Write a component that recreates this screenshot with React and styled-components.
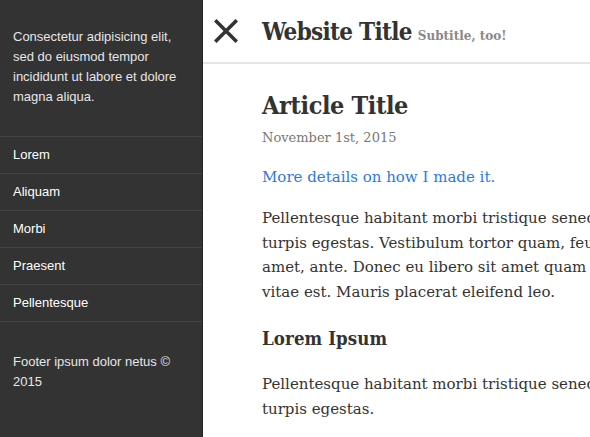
import React from 'react';
import styled, { createGlobalStyle } from 'styled-components';

const GlobalStyle = createGlobalStyle`
  html, body {
    margin: 0;
    padding: 0;
    background: #ffffff;
    overflow: hidden;
  }
`;

const Layout = styled.div`
  display: flex;
  flex-direction: row;
  width: 590px;
  height: 437px;
  overflow: hidden;
`;

const Sidebar = styled.aside`
  flex: 0 0 202px;
  display: flex;
  flex-direction: column;
  background-color: #333333;
  border-right: 1px solid #222222;
  color: #ffffff;
  font-family: "Liberation Sans", Arial, sans-serif;
  font-size: 13px;
  line-height: 20px;
`;

const Blurb = styled.p`
  margin: 0;
  padding: 27px 13px 29px;
  color: #e6e6e6;
  border-bottom: 1px solid #444444;
`;

const NavList = styled.ul`
  list-style: none;
  margin: 0;
  padding: 0;
`;

const NavItem = styled.li`
  border-bottom: 1px solid #444444;
  padding: 8px 13px;
  height: 20px;
  color: #ffffff;
`;

const Footer = styled.p`
  margin: 0;
  padding: 30px 13px;
  color: #e6e6e6;
`;

const Main = styled.main`
  flex: 1 1 auto;
  min-width: 0;
  font-family: "DejaVu Serif", "Liberation Serif", serif;
  color: #333333;
`;

const Header = styled.header`
  display: flex;
  align-items: baseline;
  height: 62px;
  border-bottom: 2px solid #e5e5e5;
  white-space: nowrap;
`;

const CloseButton = styled.div`
  align-self: center;
  display: flex;
  align-items: center;
  width: 48px;
  padding-left: 11px;
`;

const SiteTitle = styled.h1`
  margin: 0;
  padding-top: 17px;
  font-size: 24px;
  line-height: 30px;
  font-weight: 700;
  font-stretch: condensed;
  color: #333333;
  letter-spacing: -0.7px;
`;

const SiteSubtitle = styled.span`
  margin-left: 6px;
  font-size: 12px;
  font-weight: 700;
  color: #888888;
`;

const Article = styled.article`
  padding: 26px 0 0 59px;
  white-space: nowrap;
`;

const ArticleTitle = styled.h2`
  margin: 0;
  font-size: 25px;
  line-height: 32px;
  font-weight: 700;
  font-stretch: condensed;
  letter-spacing: -0.4px;
`;

const DateLine = styled.div`
  margin-top: 6px;
  font-size: 13px;
  line-height: 20px;
  color: #777777;
`;

const DetailsLink = styled.a`
  display: block;
  margin-top: 17px;
  font-size: 15px;
  line-height: 24px;
  color: #2a7ae2;
  text-decoration: none;
`;

const Paragraph = styled.p`
  margin: ${({ $gap }) => $gap}px 0 0;
  font-size: 15px;
  line-height: 24.7px;
  color: #333333;
`;

const SectionTitle = styled.h3`
  margin: 21px 0 0;
  font-size: 18.5px;
  line-height: 26px;
  font-weight: 700;
  font-stretch: condensed;
  letter-spacing: 0.1px;
`;

const CloseIcon = () => (
  <svg width="24" height="24" viewBox="0 0 24 24">
    <path d="M2.5 2.5 L21.5 21.5 M21.5 2.5 L2.5 21.5" stroke="#333" strokeWidth="3.6" strokeLinecap="square" fill="none" />
  </svg>
);

const navItems = ['Lorem', 'Aliquam', 'Morbi', 'Praesent', 'Pellentesque'];

export default function App() {
  return (
    <>
      <GlobalStyle />
      <Layout>
        <Sidebar>
          <Blurb>
            Consectetur adipisicing elit,<br />
            sed do eiusmod tempor<br />
            incididunt ut labore et dolore<br />
            magna aliqua.
          </Blurb>
          <NavList>
            {navItems.map((item) => (
              <NavItem key={item}>{item}</NavItem>
            ))}
          </NavList>
          <Footer>
            Footer ipsum dolor netus ©<br />
            2015
          </Footer>
        </Sidebar>
        <Main>
          <Header>
            <CloseButton>
              <CloseIcon />
            </CloseButton>
            <SiteTitle>Website Title</SiteTitle>
            <SiteSubtitle>Subtitle, too!</SiteSubtitle>
          </Header>
          <Article>
            <ArticleTitle>Article Title</ArticleTitle>
            <DateLine>November 1st, 2015</DateLine>
            <DetailsLink href="#">More details on how I made it.</DetailsLink>
            <Paragraph $gap={17}>
              Pellentesque habitant morbi tristique senectus et netus et malesuada fames ac<br />
              turpis egestas. Vestibulum tortor quam, feugiat vitae, ultricies eget, tempor sit<br />
              amet, ante. Donec eu libero sit amet quam egestas semper. Aenean ultricies mi<br />
              vitae est. Mauris placerat eleifend leo.
            </Paragraph>
            <SectionTitle>Lorem Ipsum</SectionTitle>
            <Paragraph $gap={20}>
              Pellentesque habitant morbi tristique senectus et netus et malesuada fames ac<br />
              turpis egestas.
            </Paragraph>
          </Article>
        </Main>
      </Layout>
    </>
  );
}
